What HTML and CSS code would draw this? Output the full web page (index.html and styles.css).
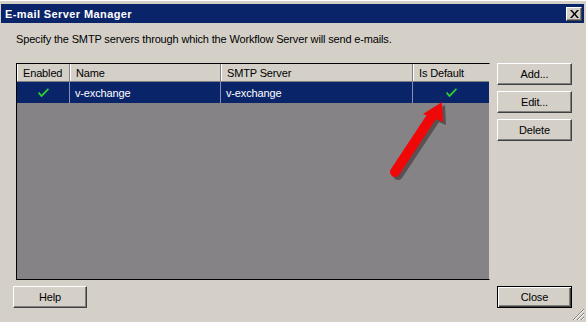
FILE: index.html
```html
<!DOCTYPE html>
<html lang="en">
<head>
<meta charset="UTF-8">
<title>E-mail Server Manager</title>
<link rel="stylesheet" href="styles.css">
</head>
<body>
    <div class="window">
        <!-- Title bar -->
        <div class="titlebar">
            <span class="title">E-mail Server Manager</span>
            <button class="close-x" aria-label="Close">
                <svg width="9" height="8" viewBox="0 0 9 8">
                    <path d="M0 0h2l2.5 3L7 0h2L5.5 4 9 8H7L4.5 5 2 8H0l3.5-4z" fill="#000"/>
                </svg>
            </button>
        </div>

        <div class="content">
            <p class="intro">Specify the SMTP servers through which the Workflow Server will send e-mails.</p>

            <div class="main">
                <div class="listview">
                    <div class="lv-header">
                        <div class="col col-enabled">Enabled</div>
                        <div class="col col-name">Name</div>
                        <div class="col col-server">SMTP Server</div>
                        <div class="col col-default">Is Default</div>
                    </div>
                    <div class="lv-row selected">
                        <div class="cell col-enabled center">
                            <svg class="check" width="11" height="9" viewBox="0 0 11 9">
                                <path d="M0.5 4.5 L3.5 8 L10.5 0.8" fill="none" stroke="#2fd22f" stroke-width="1.8"/>
                            </svg>
                        </div>
                        <div class="cell col-name">v-exchange</div>
                        <div class="cell col-server">v-exchange</div>
                        <div class="cell col-default center">
                            <svg class="check" width="11" height="9" viewBox="0 0 11 9">
                                <path d="M0.5 4.5 L3.5 8 L10.5 0.8" fill="none" stroke="#2fd22f" stroke-width="1.8"/>
                            </svg>
                        </div>
                    </div>
                </div>

                <div class="side-buttons">
                    <button class="btn">Add...</button>
                    <button class="btn">Edit...</button>
                    <button class="btn">Delete</button>
                </div>
            </div>

            <div class="footer">
                <button class="btn btn-help">Help</button>
                <button class="btn btn-default">Close</button>
            </div>
        </div>

        <!-- Annotation arrow drawn over the dialog -->
        <svg class="arrow" width="586" height="322" viewBox="0 0 586 322">
            <g transform="translate(3,3)" fill="#3a2a2a" opacity="0.55">
                <line x1="395" y1="171" x2="432" y2="115" stroke="#3a2a2a" stroke-width="10" stroke-linecap="round"/>
                <polygon points="442,101 423,113 443,121"/>
            </g>
            <line x1="395" y1="171" x2="432" y2="115" stroke="#f00808" stroke-width="10" stroke-linecap="round"/>
            <polygon points="442,101 423,113 443,121" fill="#f00808"/>
        </svg>

        <div class="grip">
            <svg width="13" height="13" viewBox="0 0 13 13">
                <path d="M12 1L1 12M12 5L5 12M12 9L9 12" stroke="#808080" stroke-width="1"/>
                <path d="M12 2L2 12M12 6L6 12M12 10L10 12" stroke="#fff" stroke-width="1"/>
            </svg>
        </div>
    </div>
</body>
</html>
```

FILE: styles.css
```css
body {
    margin: 0;
    padding: 0;
    background: #d4d0c8;
    font-family: Tahoma, "Liberation Sans", Arial, sans-serif;
    font-size: 11px;
    letter-spacing: -0.15px;
    color: #000;
    overflow: hidden;
}

.window {
    position: relative;
    width: 586px;
    height: 322px;
    padding-top: 3px;
    box-sizing: border-box;
    border-top: 1px solid #fff;
}

.titlebar {
    height: 19px;
    margin-left: 1px;
    margin-right: 2px;
    background: #0a246a;
    display: flex;
    align-items: center;
    justify-content: space-between;
    padding: 0 2px 0 4px;
}

.title {
    color: #fff;
    font-weight: bold;
    font-size: 11px;
    letter-spacing: 0.4px;
}

.close-x {
    width: 16px;
    height: 14px;
    padding: 0;
    background: #d4d0c8;
    border: 1px solid;
    border-color: #fff #404040 #404040 #fff;
    box-shadow: inset -1px -1px #808080;
    display: flex;
    align-items: center;
    justify-content: center;
}

.content {
    padding: 0 14px 0 16px;
}

.intro {
    margin: 10px 0 17px 0;
    line-height: 13px;
}

.main {
    display: flex;
    gap: 7px;
}

.listview {
    width: 474px;
    height: 217px;
    box-sizing: border-box;
    background: #858385;
    border: 1px solid #000;
    border-right-color: #d4d0c8;
    border-bottom-color: #000;
}

.lv-header {
    display: flex;
    height: 17px;
    background: #d4d0c8;
    border-bottom: 1px solid #808080;
}

.col {
    display: flex;
    align-items: center;
    padding-left: 6px;
    box-sizing: border-box;
    border-right: 1px solid #808080;
    box-shadow: inset 1px 0 #fff;
}

.col-enabled { width: 53px; }
.col-name { width: 151px; }
.col-server { width: 192px; }
.col-default { width: 76px; border-right: none; }

.lv-row {
    display: flex;
    height: 21px;
}

.lv-row.selected {
    background: #0a246a;
    color: #fff;
}

.cell {
    display: flex;
    align-items: center;
    padding-left: 5px;
    box-sizing: border-box;
    border-right: 1px solid #8a8fb0;
}

.cell.col-default {
    border-right: none;
}

.cell.center {
    justify-content: center;
    padding-left: 0;
}

.side-buttons {
    display: flex;
    flex-direction: column;
    gap: 6px;
}

.btn {
    width: 75px;
    height: 22px;
    padding: 0;
    font-family: inherit;
    font-size: 11px;
    letter-spacing: -0.15px;
    color: #000;
    background: #d4d0c8;
    border: 1px solid;
    border-color: #fff #404040 #404040 #fff;
    box-shadow: inset -1px -1px #808080;
}

.footer {
    display: flex;
    justify-content: space-between;
    margin: 6px 0 0 -3px;
}

.btn-help {
    width: 74px;
}

.btn-default {
    border: 1px solid #000;
    box-shadow: inset 1px 1px #fff, inset -1px -1px #404040, inset -2px -2px #808080;
}

.arrow {
    position: absolute;
    top: 0;
    left: 0;
    pointer-events: none;
}

.grip {
    position: absolute;
    right: 1px;
    bottom: 1px;
    width: 13px;
    height: 13px;
}
```
